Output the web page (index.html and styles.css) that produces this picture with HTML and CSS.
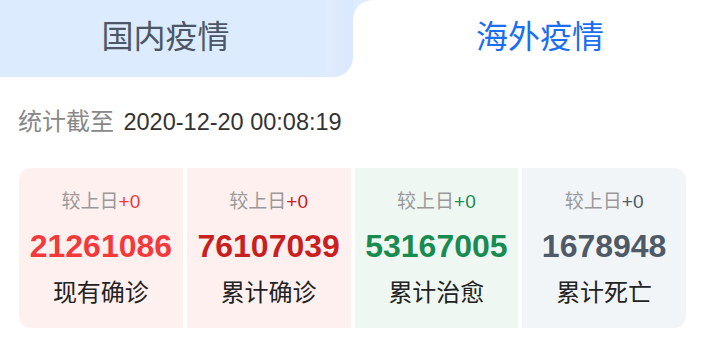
FILE: index.html
```html
<!DOCTYPE html>
<html lang="zh-CN">

<head>
    <meta charset="UTF-8">
    <meta name="viewport" content="width=device-width, initial-scale=1.0">
    <title>疫情数据</title>
    <link rel="stylesheet" href="styles.css">
</head>

<body>
    <!-- 切换标签 -->
    <div class="tabs">
        <div class="tab tab_left">国内疫情</div>
        <div class="tab_right_wrap">
            <div class="tab tab_right active">海外疫情</div>
        </div>
    </div>

    <!-- 统计时间 -->
    <p class="update_time">
        <span class="label">统计截至</span>
        <span class="time">2020-12-20 00:08:19</span>
    </p>

    <!-- 数据卡片 -->
    <ul class="stats">
        <li class="stat stat_now">
            <p class="diff">较上日<em>+0</em></p>
            <p class="num">21261086</p>
            <p class="name">现有确诊</p>
        </li>
        <li class="stat stat_total">
            <p class="diff">较上日<em>+0</em></p>
            <p class="num">76107039</p>
            <p class="name">累计确诊</p>
        </li>
        <li class="stat stat_heal">
            <p class="diff">较上日<em>+0</em></p>
            <p class="num">53167005</p>
            <p class="name">累计治愈</p>
        </li>
        <li class="stat stat_dead">
            <p class="diff">较上日<em>+0</em></p>
            <p class="num">1678948</p>
            <p class="name">累计死亡</p>
        </li>
    </ul>
</body>

</html>
```

FILE: styles.css
```css
* {
    margin: 0;
    padding: 0;
    list-style: none;
    text-decoration: none;
}

body {
    font-family: "Liberation Sans", "Noto Sans CJK SC", sans-serif;
    background-color: #fff;
}

/* 标签 */
.tabs {
    display: flex;
    height: 77px;
}

.tab {
    height: 77px;
    line-height: 74px;
    font-size: 32px;
    text-align: center;
}

.tab_left {
    width: 331px;
    padding-right: 22px;
    color: #4b5666;
    background: linear-gradient(to right, #dcebfd 326px, #e0ecfd 327px, #dae8fd);
    border-bottom-right-radius: 20px;
}

.tab_right_wrap {
    flex: 1;
    background-color: #dfecfd;
}

.tab_right {
    padding-left: 25px;
    color: #1a6ff0;
    background-color: #fff;
    border-top-left-radius: 20px;
}

/* 统计时间 */
.update_time {
    margin-top: 30px;
    padding-left: 18px;
    line-height: 30px;
}

.update_time .label {
    font-size: 24px;
    color: #888;
    margin-right: 5px;
}

.update_time .time {
    font-size: 23.5px;
    color: #333;
}

/* 数据卡片 */
.stats {
    margin: 28px 16px 0 19px;
    display: grid;
    grid-template-columns: repeat(4, 1fr);
    gap: 4px;
    border-radius: 12px;
    overflow: hidden;
}

.stat {
    padding: 22px 0 20px;
    text-align: center;
}

.stat .diff {
    font-size: 19px;
    line-height: 24px;
    color: #999;
}

.stat .diff em {
    font-style: normal;
}

.stat .num {
    margin-top: 12px;
    font-size: 32px;
    line-height: 40px;
    font-weight: bold;
}

.stat .name {
    margin-top: 12px;
    font-size: 24px;
    line-height: 30px;
    color: #222;
}

.stat_now {
    background-color: #fff0f0;
}

.stat_now em,
.stat_now .num {
    color: #f23a3c;
}

.stat_total {
    background-color: #fff0f0;
}

.stat_total em,
.stat_total .num {
    color: #c81f20;
}

.stat_heal {
    background-color: #eff7f2;
}

.stat_heal em,
.stat_heal .num {
    color: #178b50;
}

.stat_dead {
    background-color: #f2f5f7;
}

.stat_dead em,
.stat_dead .num {
    color: #4e5a68;
}
```
